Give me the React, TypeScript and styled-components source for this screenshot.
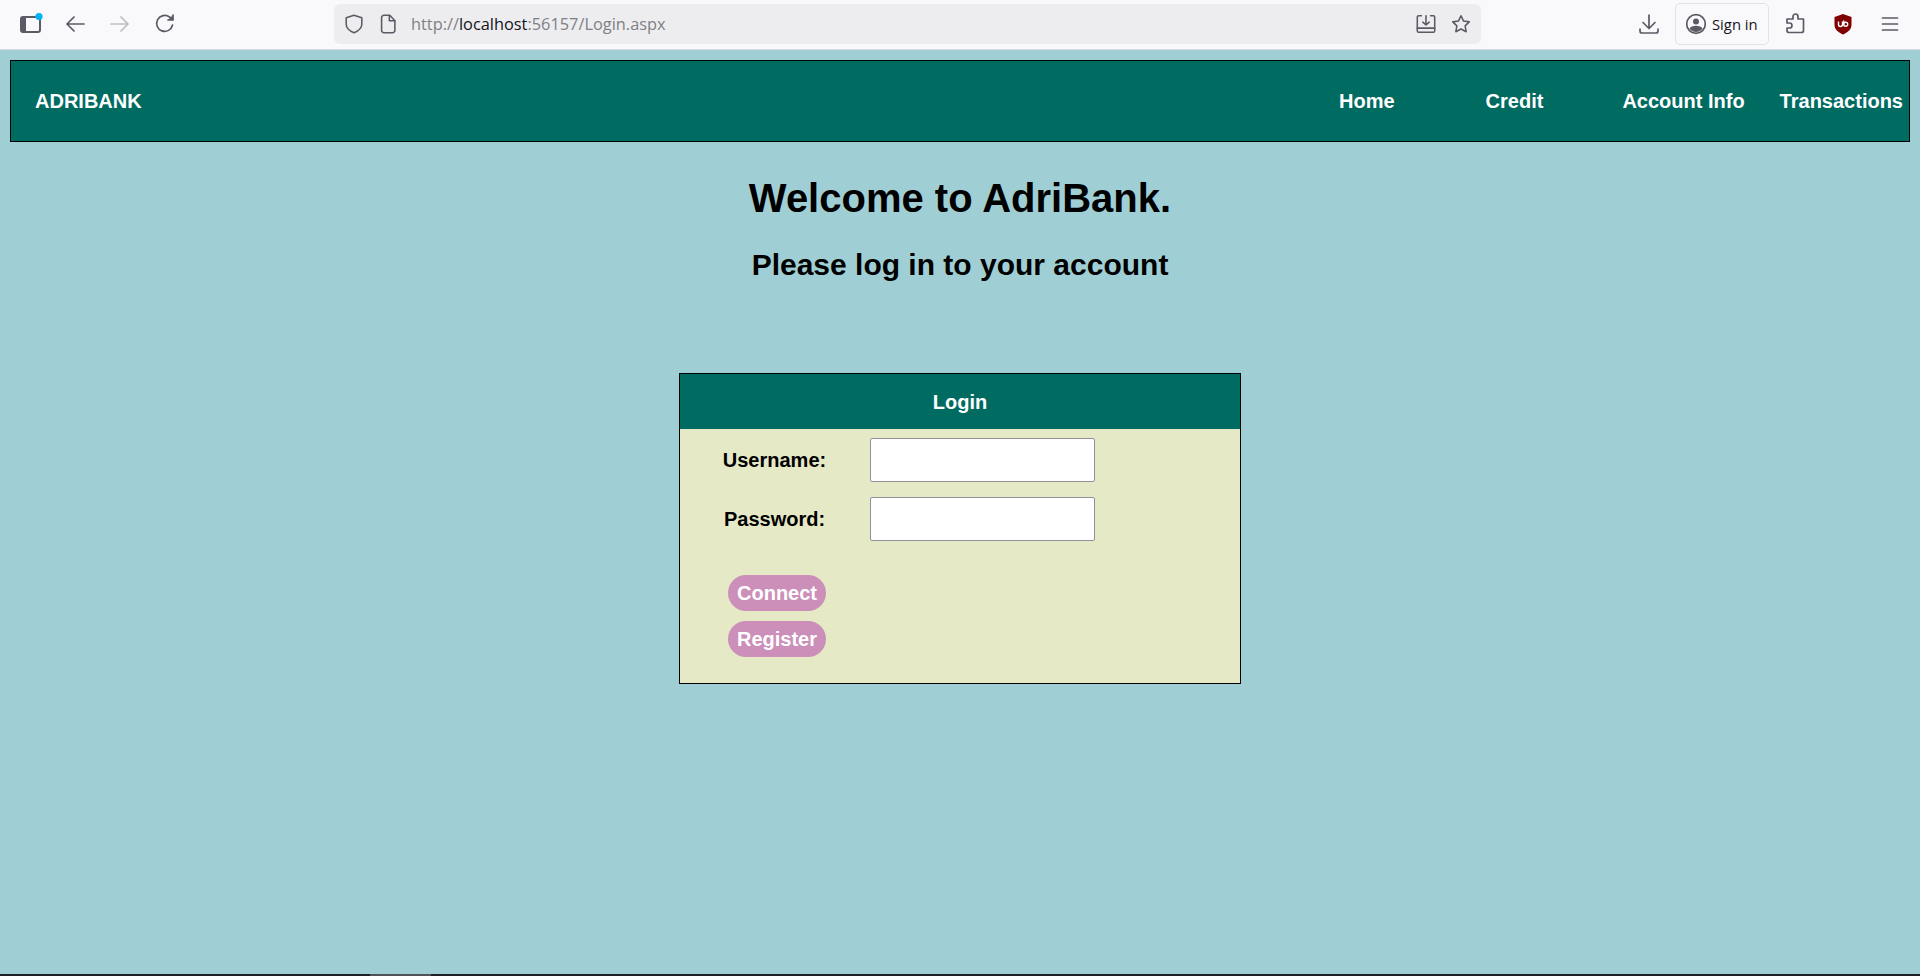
import styled, { createGlobalStyle } from "styled-components";

const GlobalStyle = createGlobalStyle`
  html, body {
    margin: 0;
    padding: 0;
    height: 100%;
    overflow: hidden;
    background: #9fcfd4;
  }
`;

const Page = styled.div`
  width: 1920px;
  height: 976px;
  display: flex;
  flex-direction: column;
  background: #9fcfd4;
  font-family: "Liberation Sans", Arial, sans-serif;
  color: #000;
`;

const Toolbar = styled.div`
  height: 48px;
  flex: none;
  padding-bottom: 1px;
  display: flex;
  align-items: center;
  background: #f9f9fb;
  border-bottom: 1px solid #d9dcde;
  font-family: "Open Sans", "Noto Sans", sans-serif;
`;

const ToolIcon = styled.span<{ $left: number; $muted?: boolean }>`
  flex: none;
  display: flex;
  width: 24px;
  height: 24px;
  margin-left: ${(p) => p.$left}px;
  color: ${(p) => (p.$muted ? "#bdbdc3" : "#5b5b66")};
`;

const UrlBar = styled.div`
  width: 1147px;
  height: 40px;
  flex: none;
  margin-left: 157px;
  padding: 0 9px 0 9px;
  box-sizing: border-box;
  display: flex;
  align-items: center;
  background: #ededf0;
  border-radius: 6px;
`;

const UrlIcon = styled.span<{ $left: number }>`
  flex: none;
  display: flex;
  width: 22px;
  height: 22px;
  margin-left: ${(p) => p.$left}px;
  color: #5b5b66;
`;

const UrlText = styled.div`
  flex: 1;
  margin-left: 12px;
  font-size: 16.35px;
  color: #7f7f86;
  white-space: nowrap;
`;

const UrlHost = styled.span`
  color: #15141a;
`;

const SignIn = styled.div`
  width: 94px;
  height: 42px;
  flex: none;
  margin-left: 14px;
  box-sizing: border-box;
  display: flex;
  align-items: center;
  gap: 5px;
  padding-left: 9px;
  background: #f9f9fb;
  border: 1px solid #e2e2e6;
  border-radius: 5px;
  font-size: 14.8px;
  color: #15141a;
`;

const Nav = styled.nav`
  height: 82px;
  flex: none;
  margin: 10px 10px 0;
  padding: 0 6px 0 24px;
  box-sizing: border-box;
  display: flex;
  align-items: center;
  background: #006b61;
  border: 1px solid #000;
  color: #fff;
  font-size: 20px;
  font-weight: 700;
`;

const Brand = styled.div`
  margin-right: auto;
`;

const NavLink = styled.a<{ $gap: number }>`
  margin-left: ${(p) => p.$gap}px;
  white-space: nowrap;
`;

const Content = styled.main`
  flex: 1;
  display: flex;
  flex-direction: column;
  align-items: center;
`;

const Title = styled.h1`
  margin: 33px 0 0;
  font-size: 40px;
  line-height: 46px;
  font-weight: 700;
`;

const Subtitle = styled.h2`
  margin: 27px 0 0;
  font-size: 30px;
  line-height: 34px;
  font-weight: 700;
`;

const Panel = styled.section`
  width: 562px;
  height: 311px;
  margin-top: 91px;
  box-sizing: border-box;
  background: #e5e9c6;
  border: 1px solid #000;
`;

const PanelHeader = styled.div`
  height: 55px;
  box-sizing: border-box;
  padding-top: 1px;
  display: flex;
  align-items: center;
  justify-content: center;
  background: #006b61;
  color: #fff;
  font-size: 20px;
  font-weight: 700;
`;

const Form = styled.div`
  display: flex;
  flex-direction: column;
  padding-top: 9px;
`;

const Row = styled.div`
  height: 44px;
  margin-bottom: 15px;
  display: flex;
  align-items: center;
`;

const Label = styled.label`
  width: 190px;
  padding-right: 1px;
  box-sizing: border-box;
  text-align: center;
  font-size: 20px;
  font-weight: 700;
`;

const Input = styled.input`
  width: 225px;
  height: 44px;
  box-sizing: border-box;
  background: #fff;
  border: 1px solid #8f8f9d;
  border-radius: 2px;
`;

const Actions = styled.div`
  display: flex;
  flex-direction: column;
  align-items: flex-start;
  gap: 10px;
  margin-top: 19px;
  padding-left: 48px;
`;

const PillButton = styled.button`
  width: 98px;
  height: 36px;
  padding: 0;
  background: #cb8fb9;
  border: none;
  border-radius: 18px;
  color: #fff;
  font-family: inherit;
  font-size: 20px;
  font-weight: 700;
`;

const BottomStrip = styled.div`
  height: 2px;
  flex: none;
  background: #1c2023;
`;

const StripThumb = styled.div`
  width: 61px;
  height: 2px;
  margin-left: 370px;
  background: #4f5356;
`;

const Svg = ({ size = 24, children }: { size?: number; children: React.ReactNode }) => (
  <svg
    width={size}
    height={size}
    viewBox="0 0 24 24"
    fill="none"
    stroke="currentColor"
    strokeWidth="1.7"
    strokeLinecap="round"
    strokeLinejoin="round"
  >
    {children}
  </svg>
);

const App = () => {
  return (
    <Page>
      <GlobalStyle />
      <Toolbar>
        <ToolIcon $left={19}>
          <svg width="24" height="24" viewBox="0 0 24 24">
            <rect x="2" y="5" width="19" height="15" rx="2" fill="none" stroke="#5b5b66" strokeWidth="2" />
            <rect x="2" y="5" width="5" height="15" fill="#5b5b66" />
            <circle cx="20" cy="4.5" r="3.6" fill="#00b3f4" />
          </svg>
        </ToolIcon>
        <ToolIcon $left={20}>
          <Svg>
            <path d="M21 12H4M11 5l-7 7 7 7" />
          </Svg>
        </ToolIcon>
        <ToolIcon $left={21} $muted>
          <Svg>
            <path d="M3 12h17M13 5l7 7-7 7" />
          </Svg>
        </ToolIcon>
        <ToolIcon $left={21}>
          <Svg>
            <path d="M19.5 13a8 8 0 1 1-3-8l3 2.5" />
            <path d="M20 3v5h-5" fill="currentColor" />
          </Svg>
        </ToolIcon>
        <UrlBar>
          <UrlIcon $left={0}>
            <Svg size={22}>
              <path d="M12 2.5l8.5 2.8v7c0 4-4 7.400-8.500 9.200-4.500-1.800-8.500-5.200-8.500-9.200v-7z" />
            </Svg>
          </UrlIcon>
          <UrlIcon $left={12}>
            <Svg size={22}>
              <path d="M5 5a2.500 2.500 0 0 1 2.500-2.500H14l5.500 6V19a2.500 2.500 0 0 1-2.500 2.500H7.500A2.500 2.500 0 0 1 5 19z" />
              <path d="M13.500 3v5.500h6" />
            </Svg>
          </UrlIcon>
          <UrlText>
            http://<UrlHost>localhost</UrlHost>:56157/Login.aspx
          </UrlText>
          <UrlIcon $left={0}>
            <Svg size={22}>
              <path d="M7 3H4a1.500 1.500 0 0 0-1.500 1.500v15A1.500 1.500 0 0 0 4 21h16a1.500 1.500 0 0 0 1.500-1.500v-15A1.500 1.500 0 0 0 20 3h-3" />
              <path d="M2.500 16.500h19" />
              <path d="M12 3v9M8.500 10l3.500 3 3.500-3" />
            </Svg>
          </UrlIcon>
          <UrlIcon $left={13}>
            <Svg size={22}>
              <path d="M12 3l2.800 5.800 6.200.9-4.500 4.400 1.100 6.300-5.600-3-5.600 3 1.100-6.300L3 9.700l6.200-.9z" />
            </Svg>
          </UrlIcon>
        </UrlBar>
        <ToolIcon $left={156}>
          <Svg>
            <path d="M12 3v13M6 10.500l6 6 6-6" />
            <path d="M3 17v2a2 2 0 0 0 2 2h14a2 2 0 0 0 2-2v-2" />
          </Svg>
        </ToolIcon>
        <SignIn>
          <svg width="22" height="22" viewBox="0 0 22 22" fill="none">
            <circle cx="11" cy="11" r="9.300" stroke="#5b5b66" strokeWidth="1.700" />
            <circle cx="11" cy="8.500" r="3" fill="#5b5b66" />
            <path d="M4.500 15.500c1-2 3.500-2.800 6.500-2.800s5.500.8 6.500 2.800c-1.500 2-4 3.500-6.500 3.500s-5-1.500-6.500-3.500z" fill="#5b5b66" />
          </svg>
          Sign in
        </SignIn>
        <ToolIcon $left={14}>
          <Svg>
            <path d="M10 4.500a2.500 2.500 0 0 1 5 0V7h5.500v11.500a2 2 0 0 1-2 2H6a2 2 0 0 1-2-2V16h2.500a2.500 2.500 0 0 0 0-5H4V7h6z" />
          </Svg>
        </ToolIcon>
        <ToolIcon $left={24}>
          <svg width="24" height="24" viewBox="0 0 24 24">
            <path d="M12 2l8.500 3v8c0 4.500-4 7.500-8.500 9.500-4.500-2-8.500-5-8.500-9.500V5z" fill="#800000" />
            <path d="M7.500 9.500v3a2 2 0 0 0 4 0v-3" fill="none" stroke="#fff" strokeWidth="1.400" />
            <circle cx="14.700" cy="12.300" r="2" fill="none" stroke="#fff" strokeWidth="1.400" />
            <path d="M12.700 8.500v4" stroke="#fff" strokeWidth="1.400" />
          </svg>
        </ToolIcon>
        <ToolIcon $left={23}>
          <Svg>
            <path d="M4.500 6h15M4.500 12h15M4.500 18h15" />
          </Svg>
        </ToolIcon>
      </Toolbar>
      <Nav>
        <Brand>ADRIBANK</Brand>
        <NavLink $gap={0}>Home</NavLink>
        <NavLink $gap={91}>Credit</NavLink>
        <NavLink $gap={79}>Account Info</NavLink>
        <NavLink $gap={35}>Transactions</NavLink>
      </Nav>
      <Content>
        <Title>Welcome to AdriBank.</Title>
        <Subtitle>Please log in to your account</Subtitle>
        <Panel>
          <PanelHeader>Login</PanelHeader>
          <Form>
            <Row>
              <Label>Username:</Label>
              <Input type="text" />
            </Row>
            <Row>
              <Label>Password:</Label>
              <Input type="password" />
            </Row>
            <Actions>
              <PillButton>Connect</PillButton>
              <PillButton>Register</PillButton>
            </Actions>
          </Form>
        </Panel>
      </Content>
      <BottomStrip>
        <StripThumb />
      </BottomStrip>
    </Page>
  );
};

export default App;
